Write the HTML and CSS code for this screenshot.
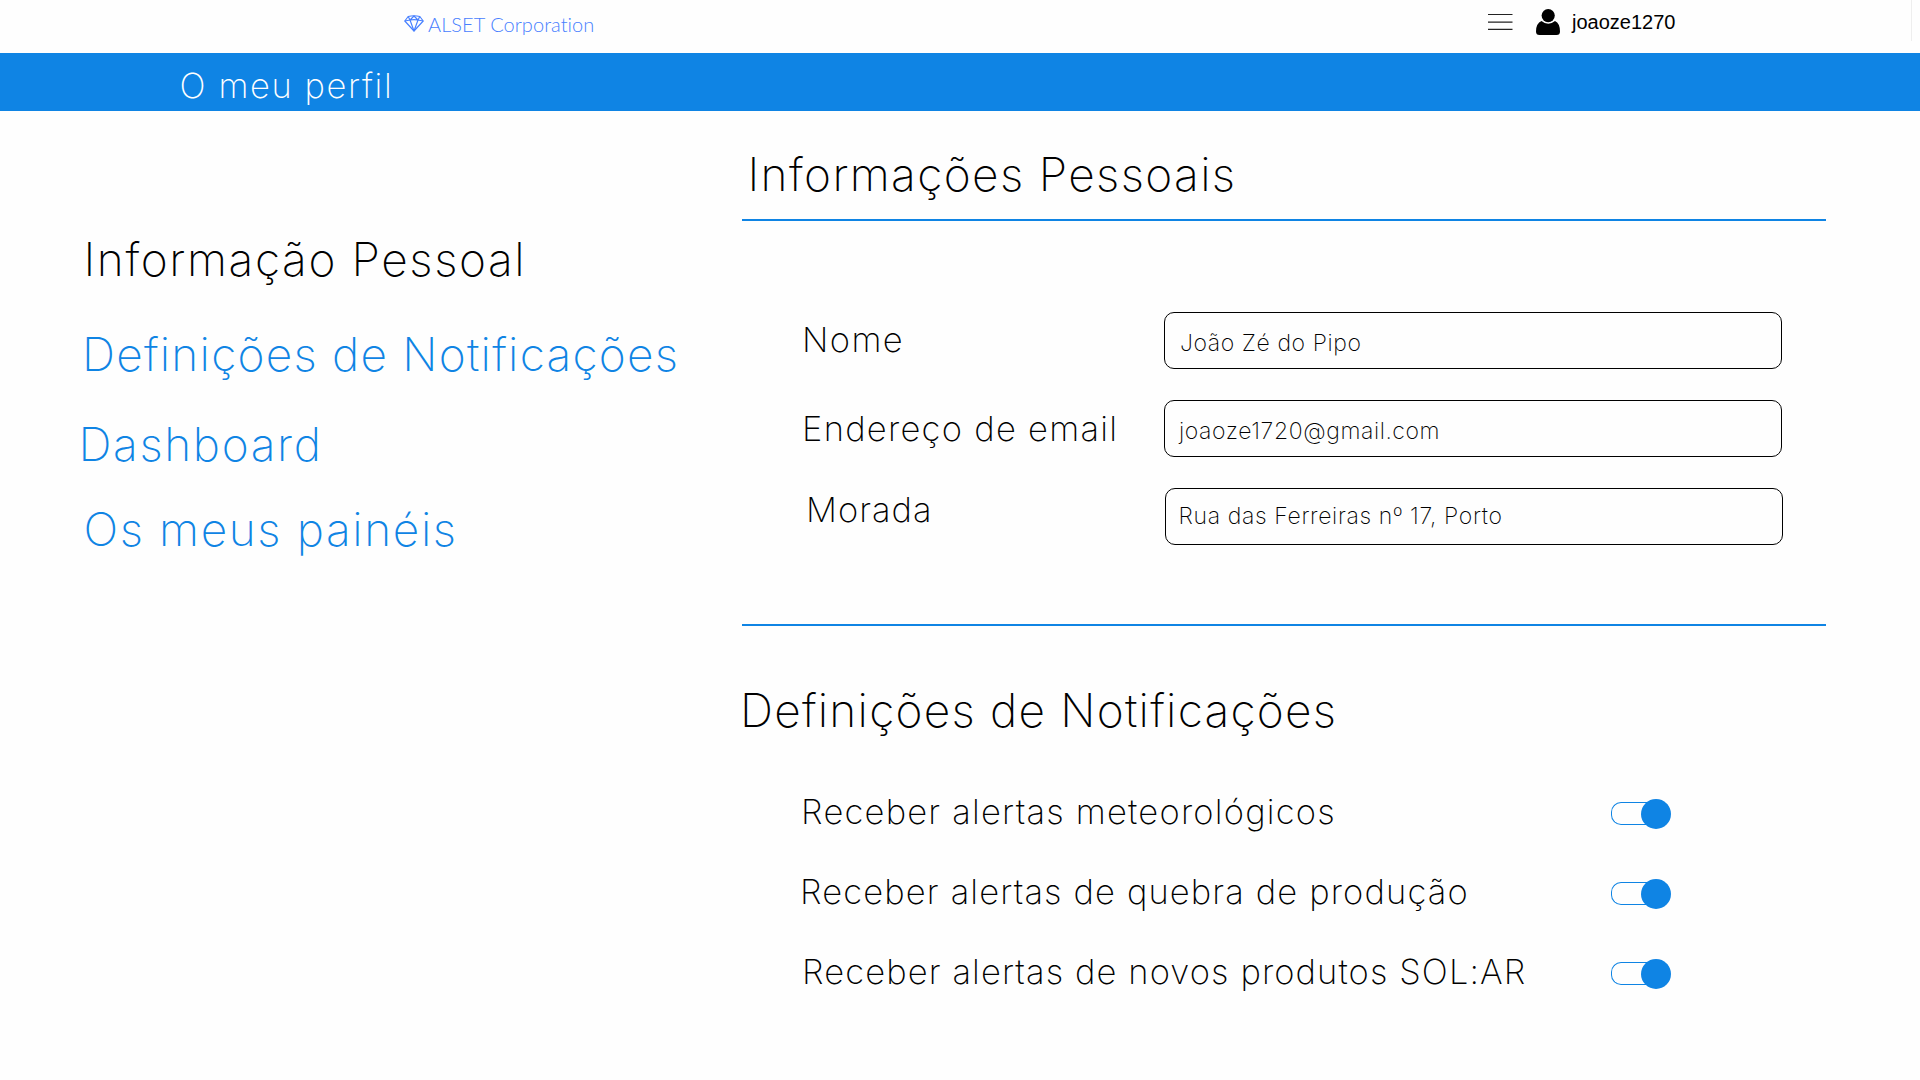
FILE: index.html
```html
<!DOCTYPE html>
<html lang="pt">
<head>
<meta charset="utf-8">
<title>O meu perfil</title>
<link rel="stylesheet" href="styles.css">
</head>
<body>
<header class="topbar">
  <a class="brand">
    <svg class="brand-icon" viewBox="0 0 20 17" fill="none" stroke="currentColor" stroke-width="1.15" stroke-linejoin="round">
      <path d="M4.200 1.500Q10 0 15.800 1.500L19.200 6 10 16 .8 6z"/>
      <path d="M.8 6 6 5q4-.7 8 0l5.200 1M4.200 1.500 6 5l4-4 4 4 1.800-3.500M6 5l4 11 4-11"/>
    </svg>
    <span class="brand-name">ALSET Corporation</span>
  </a>
  <div class="account">
    <svg class="menu-icon" viewBox="0 0 25 18" stroke="#222" stroke-width="1.2"><path d="M0 2.500h24.500M0 10.200h24.500M0 17.400h24.500"/></svg>
    <svg class="user-icon" viewBox="0 0 24 26"><circle cx="12.200" cy="6.600" r="6.600"/><path d="M5.500 12Q12.200 17.600 19 12q5 2.400 5 10.500Q24 26 20.500 26h-17Q0 26 0 22.500 0 14.400 5.500 12z"/></svg>
    <span class="user-name">joaoze1270</span>
  </div>
  <span class="edge"></span>
</header>
<div class="banner"><h1>O meu perfil</h1></div>
<div class="page">
  <nav class="sidebar">
    <a class="link active">Informação Pessoal</a>
    <a class="link notifications">Definições de Notificações</a>
    <a class="link dashboard">Dashboard</a>
    <a class="link panels">Os meus painéis</a>
  </nav>
  <main class="content">
    <section class="personal">
      <h2 class="title">Informações Pessoais</h2>
      <div class="form">
        <div class="row"><label class="label name">Nome</label><div class="field">João Zé do Pipo</div></div>
        <div class="row"><label class="label email">Endereço de email</label><div class="field field-email">joaoze1720@gmail.com</div></div>
        <div class="row"><label class="label address">Morada</label><div class="field field-address">Rua das Ferreiras nº 17, Porto</div></div>
      </div>
    </section>
    <section class="alerts">
      <h2 class="title">Definições de Notificações</h2>
      <div class="alert weather"><span>Receber alertas meteorológicos</span><i class="toggle"></i></div>
      <div class="alert drop"><span>Receber alertas de quebra de produção</span><i class="toggle"></i></div>
      <div class="alert products"><span>Receber alertas de novos produtos SOL:AR</span><i class="toggle"></i></div>
    </section>
  </main>
</div>
</body>
</html>
```
FILE: styles.css
```css
* { box-sizing: border-box; }
body { margin: 0; height: 1080px; overflow: hidden; background: #fefefe; color: #000; font-family: Inter, "Liberation Sans", sans-serif; font-weight: 200; white-space: nowrap; }
h1, h2 { margin: 0; font-weight: 200; }

.topbar { display: flex; align-items: flex-start; height: 53px; }
.brand { display: flex; align-items: flex-start; width: 1082px; padding-left: 404px; color: #4880ff; }
.brand-icon { width: 20px; height: 17px; margin: 15px 4px 0 0; }
.brand-name { margin-top: 9px; font: 300 20px/30px Lato, sans-serif; font-variant-ligatures: none; letter-spacing: .04px; }
.account { display: flex; align-items: flex-start; padding-left: 405.500px; }
.menu-icon { width: 25px; height: 18px; margin: 12px 23px 0 0; }
.user-icon { width: 24px; height: 26px; margin: 9px 12.500px 0 0; }
.user-name { font: 400 20px/30px "Liberation Sans", Arial, sans-serif; margin-top: 7px; }
.edge { width: 1px; height: 41px; margin: 0 8px 0 auto; background: #eee; }

.banner { height: 58px; padding-left: 179.500px; background: #0f84e4; color: #fff; }
.banner h1 { padding-top: 3px; font-size: 34.5px; line-height: 60px; letter-spacing: 1.6px; }

.page { display: flex; }
.sidebar { display: flex; flex-direction: column; align-items: flex-start; width: 742px; padding: 118px 0 0 78.500px; }
.link { font-size: 46px; line-height: 60px; color: #0f84e4; }
.active { margin-left: 5px; color: #000; letter-spacing: 1.6px; }
.notifications { margin: 35px 0 0 3.500px; letter-spacing: 1.23px; }
.dashboard { margin-top: 30px; letter-spacing: 1.62px; }
.panels { margin: 25px 0 0 5px; letter-spacing: 1.6px; }

.content { width: 1084px; }
.title { font-size: 46px; line-height: 60px; }
.personal { height: 515px; padding-top: 33px; border-bottom: 2px solid #0f84e4; }
.personal .title { height: 77px; padding-left: 5.500px; border-bottom: 2px solid #0f84e4; letter-spacing: 1.36px; }
.form { display: flex; flex-direction: column; gap: 31px; padding: 91px 0 0 60px; }
.row { display: flex; }
.label { width: 362px; font-size: 34.5px; line-height: 56px; }
.name { letter-spacing: 1.4px; }
.email { padding-top: 1px; letter-spacing: 1.28px; }
.address { height: 57px; padding-left: 4px; line-height: 44px; letter-spacing: 1px; }
.field { width: 618px; height: 57px; padding: 3px 0 0 15px; border: 1px solid #000; border-radius: 10px; font-size: 23px; line-height: 55px; letter-spacing: .58px; }
.field-email { padding-left: 14px; letter-spacing: .58px; }
.field-address { margin-left: 1px; padding: 0 0 0 12.500px; line-height: 54px; letter-spacing: .64px; }

.alerts { padding-top: 54px; }
.alerts .title { margin: 0 0 44px -2px; letter-spacing: 1.23px; }
.alert { display: flex; justify-content: space-between; width: 929px; height: 60px; margin-bottom: 20px; padding-left: 59px; font-size: 34.5px; line-height: 56px; }
.weather { letter-spacing: 1.22px; }
.drop { padding-left: 58px; letter-spacing: 1.14px; }
.products { padding-left: 60px; letter-spacing: 1.11px; }
.toggle { position: relative; width: 60px; height: 23px; margin-top: 18px; border: 1px solid #0f84e4; border-right-color: transparent; border-radius: 10px; }
.toggle::after { content: ""; position: absolute; top: -4px; right: -1px; width: 30px; height: 30px; border-radius: 50%; background: #0f84e4; }
```
